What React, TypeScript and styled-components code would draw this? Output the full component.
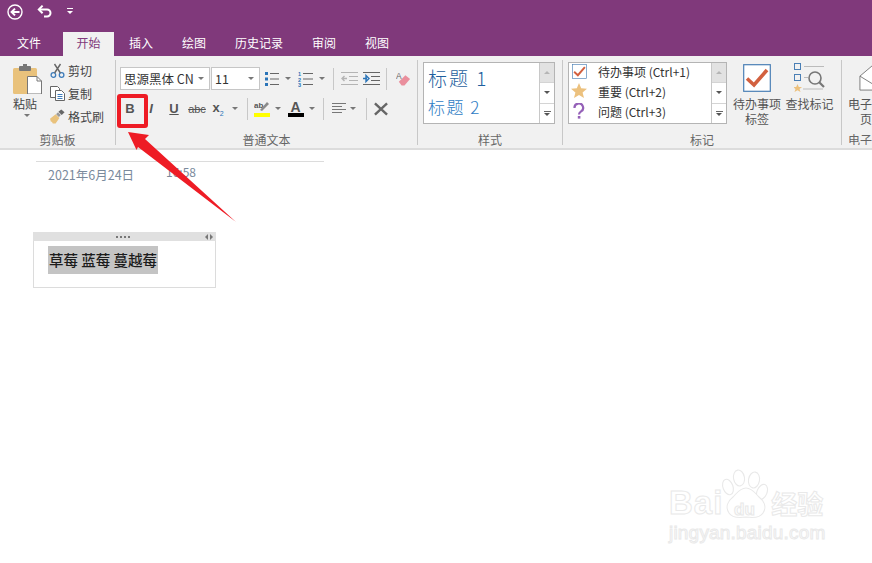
import styled, { createGlobalStyle } from 'styled-components';
import { ReactNode } from 'react';

const Global = createGlobalStyle`
  html, body { margin: 0; padding: 0; background: #fff; }
  body { font-family: "Noto Sans CJK SC", "Liberation Sans", sans-serif; font-size: 12px; color: #444; }
`;

const Page = styled.div`
  position: relative;
  width: 872px;
  height: 563px;
  overflow: hidden;
`;

const TitleBar = styled.div`
  height: 32px;
  box-sizing: border-box;
  background: #80397b;
  display: flex;
  align-items: flex-start;
  padding: 4px 0 0 7px;
  gap: 14px;
`;

const TabBar = styled.div`
  height: 24px;
  background: #80397b;
  display: flex;
  padding-left: 5px;
`;

const Tab = styled.div<{ $active?: boolean; $w: number }>`
  width: ${p => p.$w}px;
  height: 24px;
  line-height: 22px;
  text-align: center;
  font-size: 12px;
  color: ${p => (p.$active ? '#80397b' : '#fff')};
  background: ${p => (p.$active ? '#f1f1f1' : 'transparent')};
  &:first-child { margin-right: 10px; }
`;

const Ribbon = styled.div`
  height: 94px;
  box-sizing: border-box;
  background: #f1f1f1;
  border-bottom: 2px solid #dcdcdc;
  display: flex;
  padding-top: 4px;
`;

const Group = styled.div<{ $w: number; $last?: boolean }>`
  position: relative;
  width: ${p => p.$w}px;
  height: 85px;
  flex: none;
  box-sizing: border-box;
  border-right: ${p => (p.$last ? 'none' : '1px solid #c8c8c8')};
  display: flex;
  flex-direction: column;
  overflow: ${p => (p.$last ? 'hidden' : 'visible')};
`;

const GroupBody = styled.div<{ $pad: string }>`
  flex: 1;
  display: flex;
  padding: ${p => p.$pad};
  min-height: 0;
`;

const GroupLabel = styled.div<{ $left?: boolean }>`
  height: 12px;
  line-height: 14px;
  text-align: ${p => (p.$left ? 'left' : 'center')};
  padding-left: ${p => (p.$left ? 6 : 0)}px;
  font-size: 12px;
  color: #666;
  white-space: nowrap;
`;

/* clipboard */
const PasteButton = styled.div`
  width: 38px;
  display: flex;
  flex-direction: column;
  align-items: center;
  color: #444;
  line-height: 14px;
  gap: 3px;
`;

const PasteLabel = styled.div`
  margin-right: 4px;
`;

const ClipList = styled.div`
  display: flex;
  flex-direction: column;
  margin: -3px 0 0 4px;
  gap: 5px;
`;

const ClipRow = styled.div`
  display: flex;
  align-items: center;
  height: 18px;
  gap: 3px;
  white-space: nowrap;
`;

const Caret = styled.span<{ $dark?: boolean }>`
  display: inline-block;
  width: 0;
  height: 0;
  flex: none;
  border-left: 3px solid transparent;
  border-right: 3px solid transparent;
  border-top: 3px solid ${p => (p.$dark ? '#555' : '#777')};
`;

/* text group */
const TextRows = styled.div`
  display: flex;
  flex-direction: column;
  gap: 7px;
`;

const ToolRow = styled.div`
  display: flex;
  align-items: center;
  height: 23px;
`;

const Combo = styled.div<{ $w: number }>`
  width: ${p => p.$w}px;
  height: 23px;
  box-sizing: border-box;
  margin-right: 1px;
  flex: none;
  background: #fff;
  border: 1px solid #c6c6c6;
  display: flex;
  align-items: center;
  justify-content: space-between;
  padding: 0 5px 0 3px;
  font-size: 12.5px;
  color: #333;
  white-space: nowrap;
`;

const ToolSlot = styled.div<{ $w: number }>`
  width: ${p => p.$w}px;
  flex: none;
  display: flex;
  align-items: center;
  justify-content: center;
`;

const FontGlyph = styled.span<{ $italic?: boolean; $under?: boolean; $strike?: boolean; $size?: number }>`
  font-family: "Liberation Sans", sans-serif;
  font-size: ${p => p.$size ?? 13}px;
  font-weight: ${p => (p.$strike ? 400 : 700)};
  font-style: ${p => (p.$italic ? 'italic' : 'normal')};
  text-decoration: ${p => (p.$under ? 'underline' : p.$strike ? 'line-through' : 'none')};
  color: #555;
`;

const Sub = styled.sub`
  font-size: 7px;
  color: #2a74b8;
  font-weight: 400;
`;

const Divider = styled.div`
  width: 1px;
  height: 22px;
  flex: none;
  background: #c8c8c8;
`;

/* galleries */
const Gallery = styled.div<{ $w: number }>`
  width: ${p => p.$w}px;
  height: 62px;
  box-sizing: border-box;
  background: #fff;
  border: 1px solid #b4b4b4;
  display: flex;
  flex: none;
`;

const GalleryBody = styled.div`
  flex: 1;
  min-width: 0;
  overflow: hidden;
`;

const Scroller = styled.div`
  width: 14px;
  flex: none;
  border-left: 1px solid #c8c8c8;
  display: flex;
  flex-direction: column;
`;

const ScrollCell = styled.div<{ $off?: boolean }>`
  flex: 1;
  display: flex;
  align-items: center;
  justify-content: center;
  flex-direction: column;
  gap: 1px;
  background: ${p => (p.$off ? '#e2e2e2' : '#fff')};
  & + & { border-top: 1px solid #d4d4d4; }
`;

const UpCaret = styled.span`
  width: 0;
  height: 0;
  border-left: 3px solid transparent;
  border-right: 3px solid transparent;
  border-bottom: 3px solid #b5b5b5;
`;

const MoreBar = styled.span`
  width: 7px;
  height: 1px;
  background: #666;
`;

const Heading = styled.div<{ $level: 1 | 2 }>`
  padding-left: 4px;
  height: ${p => (p.$level === 1 ? 31 : 28)}px;
  line-height: ${p => (p.$level === 1 ? 29 : 26)}px;
  font-size: ${p => (p.$level === 1 ? 19 : 17)}px;
  font-weight: 300;
  letter-spacing: ${p => (p.$level === 1 ? 2 : 1.5)}px;
  white-space: nowrap;
  color: ${p => (p.$level === 1 ? '#1f5f9e' : '#2e7cc4')};
`;

const TagList = styled.div`
  margin-top: -2px;
`;

const TagRow = styled.div`
  height: 20px;
  display: flex;
  align-items: center;
  white-space: nowrap;
  color: #333;
  font-size: 12px;
`;

const TagIcon = styled.div`
  width: 18px;
  margin: 0 10px 0 1px;
  flex: none;
  display: flex;
  align-items: center;
  justify-content: center;
`;

const BigButton = styled.div<{ $w: number; $gap?: number }>`
  width: ${p => p.$w}px;
  margin-left: ${p => p.$gap ?? 0}px;
  flex: none;
  display: flex;
  flex-direction: column;
  align-items: center;
  text-align: center;
  line-height: 15px;
  color: #555;
  white-space: nowrap;
`;

const IconHolder = styled.div`
  height: 32px;
  display: flex;
  align-items: center;
  margin-bottom: 2px;
`;

/* note page */
const Canvas = styled.div`
  padding: 11px 0 0 36px;
`;

const TitleLine = styled.div`
  width: 288px;
  height: 1px;
  background: #dcdcdc;
`;

const DateRow = styled.div`
  display: flex;
  font-size: 12px;
  color: #7a8a9c;
  padding: 1px 0 0 12px;
`;

const DateText = styled.div`
  width: 118px;
  padding-top: 2px;
  font-size: 12.5px;
`;

const NoteBox = styled.div`
  width: 183px;
  height: 56px;
  margin: 48px 0 0 -3px;
  box-sizing: border-box;
  border: 1px solid #dcdcdc;
  border-top: none;
`;

const NoteHandle = styled.div`
  height: 9px;
  margin: 0 -1px;
  background: #e0e0e0;
  display: flex;
  align-items: center;
  justify-content: flex-end;
  padding-right: 3px;
  gap: 2px;
`;

const Dots = styled.div`
  flex: 1;
  display: flex;
  justify-content: center;
  gap: 2px;
  padding-left: 9px;
`;

const Dot = styled.span`
  width: 2px;
  height: 2px;
  background: #777;
`;

const Nudge = styled.span<{ $dir: 'l' | 'r' }>`
  width: 0;
  height: 0;
  border-top: 3px solid transparent;
  border-bottom: 3px solid transparent;
  ${p => (p.$dir === 'l' ? 'border-right: 3px solid #777;' : 'border-left: 3px solid #777;')}
`;

const NoteText = styled.span`
  display: inline-block;
  margin: 5px 0 0 14px;
  height: 28px;
  line-height: 28px;
  padding: 0 1px;
  background: #c4c4c4;
  font-size: 14.5px;
  font-weight: 500;
  color: #1c1c1c;
`;

/* overlays */
const Highlight = styled.div`
  position: absolute;
  left: 117px;
  top: 94px;
  width: 31px;
  height: 34px;
  box-sizing: border-box;
  border: 4px solid #ee1c25;
  border-radius: 3px;
`;

const ArrowLayer = styled.svg`
  position: absolute;
  left: 120px;
  top: 125px;
`;

const Watermark = styled.div`
  position: absolute;
  left: 669px;
  top: 466px;
  width: 170px;
  color: #fff;
  -webkit-text-stroke: 1px #e9e9e9;
  font-family: "Liberation Sans", sans-serif;
`;

const MarkTop = styled.div`
  display: flex;
  align-items: flex-end;
  height: 55px;
`;

const MarkBai = styled.span`
  font-size: 33px;
  font-weight: 700;
  line-height: 36px;
  letter-spacing: 1px;
`;

const MarkCn = styled.span`
  margin-left: 48px;
  font-family: "Noto Sans CJK SC", sans-serif;
  font-size: 26px;
  line-height: 36px;
  font-weight: 700;
`;

const MarkUrl = styled.div`
  font-size: 19px;
  line-height: 24px;
  letter-spacing: 0.2px;
`;

const PawSvg = styled.svg`
  position: absolute;
  left: 0;
  top: 0;
  fill: #fff;
  stroke: #e9e9e9;
  stroke-width: 1.1;
`;

const QuickSvg = styled.svg`
  margin-top: 4px;
`;

const Scroll = () => (
  <Scroller>
    <ScrollCell $off><UpCaret /></ScrollCell>
    <ScrollCell><Caret $dark /></ScrollCell>
    <ScrollCell><MoreBar /><Caret $dark /></ScrollCell>
  </Scroller>
);

const Slot = ({ w, children }: { w: number; children: ReactNode }) => <ToolSlot $w={w}>{children}</ToolSlot>;

const BackIcon = () => (
  <svg width="16" height="16" viewBox="0 0 16 16" fill="none" stroke="#fff">
    <circle cx="8" cy="8" r="7" strokeWidth="1.4" />
    <path d="M12.5 8H5M8 4.6 4.6 8 8 11.4" strokeWidth="2" />
  </svg>
);

const UndoIcon = () => (
  <svg width="16" height="14" viewBox="0 0 16 14" fill="none" stroke="#fff" strokeWidth="2">
    <path d="M2 5.5h8a3.5 3.5 0 0 1 0 7H7" />
    <path d="M5.6 1.6 1.8 5.5l3.8 3.8" />
  </svg>
);

const QuickIcon = () => (
  <QuickSvg width="6" height="6" viewBox="0 0 6 6" fill="#fff">
    <rect x="0" y="0" width="6" height="1" />
    <path d="M0 3h6L3 6z" />
  </QuickSvg>
);

const PasteIcon = () => (
  <svg width="29" height="30" viewBox="0 0 29 30">
    <rect x="0" y="4" width="24" height="26" rx="1.5" fill="#e9c27c" />
    <rect x="6" y="2" width="12" height="5" rx="1" fill="#777" />
    <rect x="10" y="0" width="4" height="3" fill="#777" />
    <path d="M14.5 12.5H24l4.5 4.5v13h-14z" fill="#fff" stroke="#777" />
    <path d="M24 12.5V17h4.5" fill="none" stroke="#777" />
  </svg>
);

const CutIcon = () => (
  <svg width="15" height="15" viewBox="0 0 15 15" fill="none">
    <circle cx="3.4" cy="12" r="2.3" stroke="#3e7cba" strokeWidth="1.3" />
    <circle cx="11.6" cy="12" r="2.3" stroke="#3e7cba" strokeWidth="1.3" />
    <path d="M4.6 10 10.5 1M10.4 10 4.5 1" stroke="#666" strokeWidth="1.4" />
  </svg>
);

const CopyIcon = () => (
  <svg width="15" height="15" viewBox="0 0 15 15" fill="#fff" stroke="#666">
    <path d="M.5.5h7l2 2v9h-9z" />
    <path d="M5.5 4.5h6l3 3v7h-9z" />
    <path d="M7.5 8.5h5M7.5 10.5h5M7.5 12.5h5" stroke="#3e7cba" />
  </svg>
);

const BrushIcon = () => (
  <svg width="15" height="15" viewBox="0 0 16 15">
    <path d="M0 10 6 5l4 4-4 6H3l-1-2-1 0z" fill="#e9c27c" />
    <path d="m6.5 5 2-2 3 3-2 2z" fill="#999" />
    <path d="M9 2.5 12 0l3.5 3-3 3z" fill="#666" />
  </svg>
);

const BulletsIcon = () => (
  <svg width="14" height="16" viewBox="0 0 14 16">
    <g fill="#2a74b8"><rect x="0" y="1" width="3" height="3" /><rect x="0" y="6.5" width="3" height="3" /><rect x="0" y="12" width="3" height="3" /></g>
    <path d="M5 2.5h9M5 8h9M5 13.5h9" stroke="#666" />
  </svg>
);

const NumberedIcon = () => (
  <svg width="15" height="16" viewBox="0 0 15 16">
    <g fill="#2a74b8" fontSize="5.5" fontFamily="Liberation Sans" fontWeight="700">
      <text x="0" y="5">1</text><text x="0" y="10.5">2</text><text x="0" y="16">3</text>
    </g>
    <path d="M5 2.5h10M5 8h10M5 13.5h10" stroke="#666" />
  </svg>
);

const OutdentIcon = ({ on }: { on?: boolean }) => (
  <svg width="17" height="14" viewBox="0 0 17 14" fill="none">
    <path d="M0 .5h17M8 4.5h9M8 8.5h9M0 12.5h17" stroke={on ? '#666' : '#b4b4b4'} />
    {on
      ? <path d="M0 6.5h4M3 3.5l3 3-3 3z" stroke="#2a74b8" strokeWidth="1.4" />
      : <path d="M6 6.5H2M3.5 4 1 6.5 3.5 9" stroke="#b4b4b4" strokeWidth="1.4" />}
  </svg>
);

const EraserIcon = () => (
  <svg width="15" height="16" viewBox="0 0 16 16">
    <text x="0" y="8" fontSize="9" fontFamily="Liberation Sans" fill="#666">A</text>
    <path d="M3 11 10 4l5 4-6 7H6z" fill="#ea8f9d" />
  </svg>
);

const HighlightIcon = () => (
  <svg width="16" height="17" viewBox="0 0 16 17">
    <text x="0" y="8" fontSize="8" fontFamily="Liberation Sans" fontWeight="700" fill="#555">ab</text>
    <path d="m6 10 7-8 2 2-7 7z" fill="#8a8a8a" />
    <rect x="0" y="13" width="16" height="4" fill="#ffff00" />
  </svg>
);

const ColorIcon = () => (
  <svg width="16" height="17" viewBox="0 0 16 17">
    <text x="2.5" y="12" fontSize="14" fontFamily="Liberation Sans" fontWeight="700" fill="#555">A</text>
    <rect x="0" y="13" width="16" height="4" fill="#000" />
  </svg>
);

const AlignIcon = () => (
  <svg width="14" height="11" viewBox="0 0 14 11">
    <path d="M0 .5h14M0 3.5h10M0 6.5h14M0 9.5h10" stroke="#777" />
  </svg>
);

const ClearIcon = () => (
  <svg width="15" height="14" viewBox="0 0 15 14">
    <path d="M1 1l13 12M14 1 1 13" stroke="#666" strokeWidth="2.6" />
  </svg>
);

const Check = ({ size }: { size: number }) => (
  <svg width={size} height={size} viewBox="0 0 28 28">
    <rect x=".7" y=".7" width="26.6" height="26.6" fill="#fff" stroke="#4a7fb5" strokeWidth="1.2" />
    <path d="M4 14.5 11 21 24 6" fill="none" stroke="#d2603f" strokeWidth="3.6" />
  </svg>
);

const Star = ({ size }: { size: number }) => (
  <svg width={size} height={size} viewBox="0 0 16 16">
    <path d="M8 0l2.2 5.2 5.8.5-4.4 3.7 1.4 5.6L8 12l-5 3 1.4-5.6L0 5.7l5.8-.5z" fill="#ecc17e" />
  </svg>
);

const Question = () => (
  <svg width="12" height="16" viewBox="0 0 12 16" fill="none">
    <path d="M1.5 5a4.3 4.3 0 1 1 6.6 3.4C6.8 9.3 6 10 6 11.5" stroke="#9561b8" strokeWidth="2.2" />
    <rect x="4.8" y="13" width="2.6" height="2.6" fill="#9561b8" />
  </svg>
);

const FindIcon = () => (
  <svg width="32" height="30" viewBox="0 0 32 30" fill="none">
    <rect x=".5" y=".5" width="6" height="6" stroke="#4a7fb5" />
    <rect x=".5" y="11.5" width="6" height="6" stroke="#4a7fb5" />
    <path d="M10 3.5h20M10 14.5h4" stroke="#bbb" />
    <path d="M9 26h20" stroke="#bbb" />
    <circle cx="21" cy="15" r="6" stroke="#777" strokeWidth="1.6" />
    <path d="m25 19 5 5" stroke="#777" strokeWidth="2.2" />
    <path d="M3.5 21l1.3 3h3.2l-2.5 2 1 3-3-1.8-3 1.8 1-3-2.5-2h3.2z" fill="#ecc17e" />
  </svg>
);

const MailIcon = () => (
  <svg width="28" height="26" viewBox="0 0 28 28" fill="#fff" stroke="#777">
    <path d="M1 12 14 1l13 11v15H1z" />
    <path d="M1 12l13 8 13-8" />
  </svg>
);

const Paw = () => (
  <PawSvg width="140" height="58" viewBox="0 0 140 58">
    <ellipse cx="59" cy="21" rx="5" ry="8" transform="rotate(-20 59 21)" />
    <ellipse cx="70" cy="12" rx="5.5" ry="8" transform="rotate(-10 70 12)" />
    <ellipse cx="85" cy="14" rx="5.5" ry="8" transform="rotate(10 85 14)" />
    <ellipse cx="93" cy="26" rx="5" ry="8" transform="rotate(22 93 26)" />
    <path d="M77 22c6 0 9 5 13 9 5 4 8 10 4 16-3 5-10 5-17 4-7 1-14 1-17-4-4-6-1-12 4-16 4-4 7-9 13-9z" />
    <text x="65" y="49" fontSize="17" fontWeight="700" fontFamily="Liberation Sans">du</text>
  </PawSvg>
);

export default function App() {
  return (
    <Page>
      <Global />
      <TitleBar>
        <BackIcon />
        <UndoIcon />
        <QuickIcon />
      </TitleBar>
      <TabBar>
        <Tab $w={48}>文件</Tab>
        <Tab $w={51} $active>开始</Tab>
        <Tab $w={54}>插入</Tab>
        <Tab $w={52}>绘图</Tab>
        <Tab $w={78}>历史记录</Tab>
        <Tab $w={52}>审阅</Tab>
        <Tab $w={54}>视图</Tab>
      </TabBar>

      <Ribbon>
        <Group $w={116}>
          <GroupBody $pad="4px 0 0 8px">
            <PasteButton>
              <PasteIcon />
              <PasteLabel>粘贴</PasteLabel>
              <Caret />
            </PasteButton>
            <ClipList>
              <ClipRow><CutIcon />剪切</ClipRow>
              <ClipRow><CopyIcon />复制</ClipRow>
              <ClipRow><BrushIcon />格式刷</ClipRow>
            </ClipList>
          </GroupBody>
          <GroupLabel>剪贴板</GroupLabel>
        </Group>

        <Group $w={302}>
          <GroupBody $pad="7px 0 0 4px">
            <TextRows>
              <ToolRow>
                <Combo $w={90}>思源黑体 CN<Caret /></Combo>
                <Combo $w={49}>11<Caret /></Combo>
                <Slot w={22}><BulletsIcon /></Slot>
                <Slot w={10}><Caret /></Slot>
                <Slot w={25}><NumberedIcon /></Slot>
                <Slot w={8}><Caret /></Slot>
                <Slot w={14}><Divider /></Slot>
                <Slot w={18}><OutdentIcon /></Slot>
                <Slot w={26}><OutdentIcon on /></Slot>
                <Slot w={5}><Divider /></Slot>
                <Slot w={28}><EraserIcon /></Slot>
              </ToolRow>
              <ToolRow>
                <Slot w={20}><FontGlyph>B</FontGlyph></Slot>
                <Slot w={22}><FontGlyph $italic>I</FontGlyph></Slot>
                <Slot w={24}><FontGlyph $under>U</FontGlyph></Slot>
                <Slot w={22}><FontGlyph $strike $size={11}>abc</FontGlyph></Slot>
                <Slot w={20}><FontGlyph>x<Sub>2</Sub></FontGlyph></Slot>
                <Slot w={14}><Caret /></Slot>
                <Slot w={10}><Divider /></Slot>
                <Slot w={20}><HighlightIcon /></Slot>
                <Slot w={12}><Caret /></Slot>
                <Slot w={24}><ColorIcon /></Slot>
                <Slot w={8}><Caret /></Slot>
                <Slot w={14}><Divider /></Slot>
                <Slot w={18}><AlignIcon /></Slot>
                <Slot w={10}><Caret /></Slot>
                <Slot w={16}><Divider /></Slot>
                <Slot w={14}><ClearIcon /></Slot>
              </ToolRow>
            </TextRows>
          </GroupBody>
          <GroupLabel>普通文本</GroupLabel>
        </Group>

        <Group $w={145}>
          <GroupBody $pad="2px 0 0 5px">
            <Gallery $w={132}>
              <GalleryBody>
                <Heading $level={1}>标题 1</Heading>
                <Heading $level={2}>标题 2</Heading>
              </GalleryBody>
              <Scroll />
            </Gallery>
          </GroupBody>
          <GroupLabel>样式</GroupLabel>
        </Group>

        <Group $w={279}>
          <GroupBody $pad="2px 0 0 5px">
            <Gallery $w={159}>
              <GalleryBody>
                <TagList>
                  <TagRow><TagIcon><Check size={15} /></TagIcon>待办事项 (Ctrl+1)</TagRow>
                  <TagRow><TagIcon><Star size={16} /></TagIcon>重要 (Ctrl+2)</TagRow>
                  <TagRow><TagIcon><Question /></TagIcon>问题 (Ctrl+3)</TagRow>
                </TagList>
              </GalleryBody>
              <Scroll />
            </Gallery>
            <BigButton $w={50} $gap={5}>
              <IconHolder><Check size={28} /></IconHolder>
              待办事项
              <br />
              标签
            </BigButton>
            <BigButton $w={55}>
              <IconHolder><FindIcon /></IconHolder>
              查找标记
            </BigButton>
          </GroupBody>
          <GroupLabel>标记</GroupLabel>
        </Group>

        <Group $w={30} $last>
          <GroupBody $pad="2px 0 0 6px">
            <BigButton $w={48}>
              <IconHolder><MailIcon /></IconHolder>
              电子邮件
              <br />
              页面
            </BigButton>
          </GroupBody>
          <GroupLabel $left>电子邮件</GroupLabel>
        </Group>
      </Ribbon>

      <Canvas>
        <TitleLine />
        <DateRow>
          <DateText>2021年6月24日</DateText>
          <div>16:58</div>
        </DateRow>
        <NoteBox>
          <NoteHandle>
            <Dots><Dot /><Dot /><Dot /><Dot /></Dots>
            <Nudge $dir="l" />
            <Nudge $dir="r" />
          </NoteHandle>
          <NoteText>草莓 蓝莓 蔓越莓</NoteText>
        </NoteBox>
      </Canvas>

      <Highlight />
      <ArrowLayer width="120" height="100" viewBox="120 125 120 100">
        <path d="M128 132 149 135 145 139 236 222 138 147 136.500 150z" fill="#ee1c25" />
      </ArrowLayer>

      <Watermark>
        <Paw />
        <MarkTop>
          <MarkBai>Bai</MarkBai>
          <MarkCn>经验</MarkCn>
        </MarkTop>
        <MarkUrl>jingyan.baidu.com</MarkUrl>
      </Watermark>
    </Page>
  );
}
